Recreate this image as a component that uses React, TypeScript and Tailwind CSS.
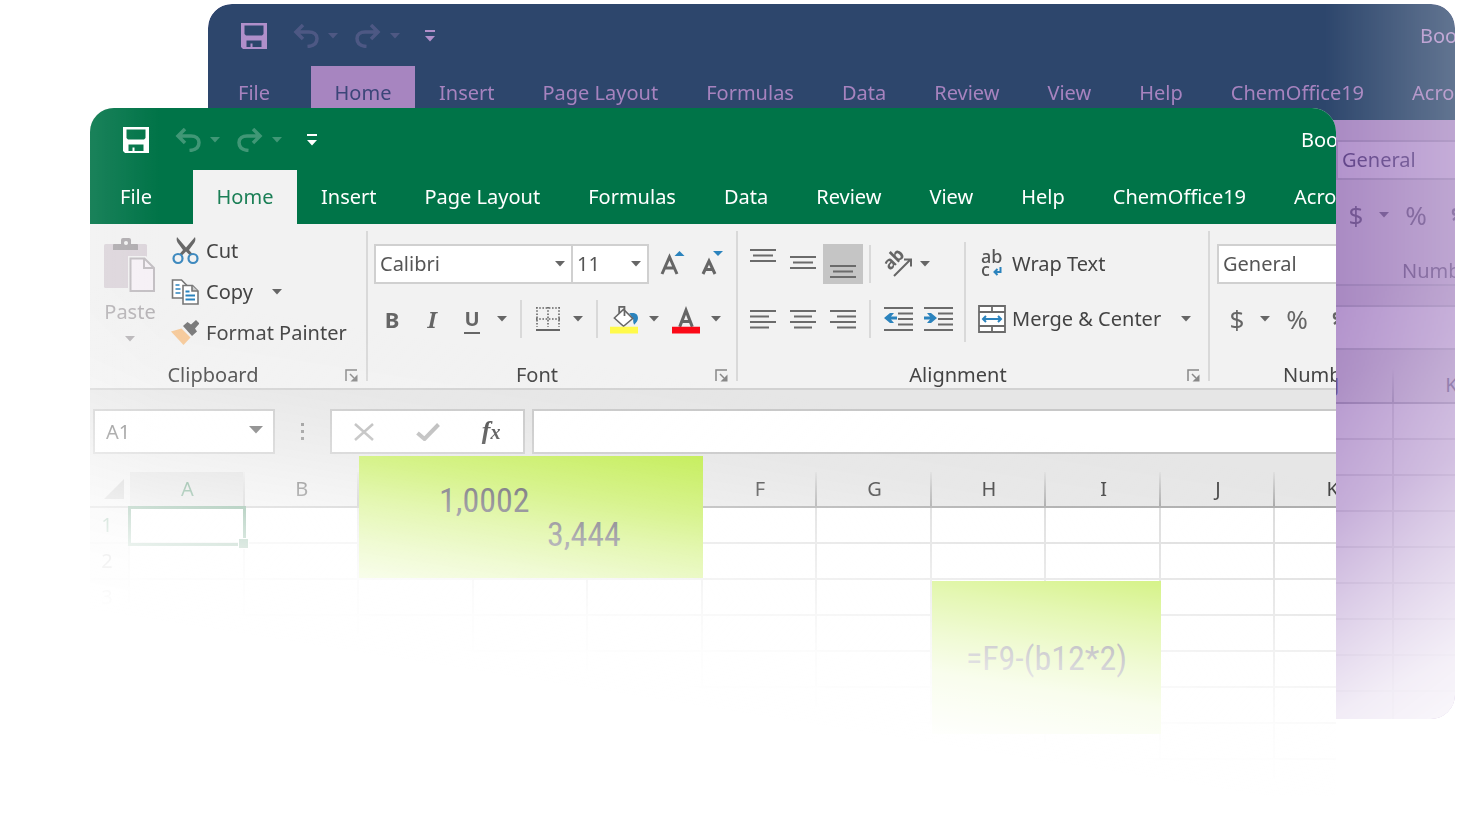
import type { ReactNode } from "react";
import clsx from "clsx";

interface Theme {
  bar: string;
  ink: string;
  tab: string;
  activeTab: string;
}

const green: Theme = {
  bar: "bg-[#007448]",
  ink: "text-white",
  tab: "text-white",
  activeTab: "bg-[#f2f2f2] text-[#1b7f56]",
};

const purple: Theme = {
  bar: "bg-[#2d466c]",
  ink: "text-[#b08fca]",
  tab: "text-[#a783bf]",
  activeTab: "bg-[#a785c0] text-[#3b4679]",
};

const TABS = ["Insert", "Page Layout", "Formulas", "Data", "Review", "View", "Help", "ChemOffice19", "Acrobat"];
// C to E stay unnamed, the first highlighted range lies over their headers
const COLUMNS = ["A", "B", "", "", "", "F", "G", "H", "I", "J", "K"];
const ROWS = [1, 2, 3, 4, 5, 6, 7, 8];

const Caret = ({ className }: { className?: string }) => (
  <svg viewBox="0 0 10 6" className={clsx("h-[6px] w-[10px]", className)} fill="currentColor" aria-hidden="true">
    <path d="M0 0h10L5 5.6z" />
  </svg>
);

const CaretButton = ({ label, className }: { label: string; className?: string }) => (
  <button type="button" aria-label={label} className={clsx("flex h-10 w-5 shrink-0 items-center justify-center", className)}>
    <Caret />
  </button>
);

const IconButton = ({ label, className, children }: { label: string; className?: string; children: ReactNode }) => (
  <button type="button" aria-label={label} className={clsx("flex h-10 shrink-0 items-center justify-center", className)}>
    {children}
  </button>
);

const SaveIcon = () => (
  <svg viewBox="0 0 26 26" className="h-[26px] w-[26px]" aria-hidden="true">
    <path
      fill="currentColor"
      fillRule="evenodd"
      d="M0 0h26v26H2l-2-2zM3.500 2.500v8.500l1.500 1.500h16l1.500-1.500V2.500zM5.500 17.500V24h4v-3.500h2V24h9v-6.500z"
    />
  </svg>
);

const UndoIcon = ({ flip }: { flip?: boolean }) => (
  <svg
    viewBox="0 0 26 24"
    className={clsx("h-6 w-[26px]", flip && "-scale-x-100")}
    fill="none"
    stroke="currentColor"
    strokeWidth="3.500"
    aria-hidden="true"
  >
    <path d="M10 1L3 8l7 7M3 8h13c4.500 0 8 2.500 8 6.500 0 4.500-3 7.500-9.500 8" />
  </svg>
);

const TitleBar = ({ theme }: { theme: Theme }) => (
  <div className={clsx("flex h-[62px] items-center pt-[2px] pl-[33px]", theme.ink)}>
    <button type="button" aria-label="Save">
      <SaveIcon />
    </button>
    <button type="button" aria-label="Undo" className="ml-[26px] opacity-25">
      <UndoIcon />
    </button>
    <CaretButton label="Undo history" className="ml-1 opacity-25" />
    <button type="button" aria-label="Redo" className="ml-3 opacity-25">
      <UndoIcon flip />
    </button>
    <CaretButton label="Redo history" className="ml-1 opacity-25" />
    <button type="button" aria-label="Customize toolbar" className="ml-5">
      <svg viewBox="0 0 10 12" className="h-3 w-[10px]" fill="currentColor" aria-hidden="true">
        <path d="M0 0h10v2H0zM0 6h10l-5 5.500z" />
      </svg>
    </button>
    <span className="ml-auto w-[35px] whitespace-nowrap">Book1</span>
  </div>
);

const TabBar = ({ theme }: { theme: Theme }) => (
  <nav className={clsx("flex h-[54px] whitespace-nowrap", theme.tab)}>
    <button type="button" className="w-[103px] shrink-0 pl-[30px] text-left">
      File
    </button>
    <button type="button" className={clsx("w-[104px] shrink-0", theme.activeTab)}>
      Home
    </button>
    {TABS.map((tab) => (
      <button key={tab} type="button" className="shrink-0 px-6">
        {tab}
      </button>
    ))}
  </nav>
);

const Separator = ({ className }: { className: string }) => <div className={clsx("w-[2px] shrink-0 bg-[#d9d9d9]", className)} />;

const Group = ({ name, className, children }: { name: string; className: string; children: ReactNode }) => (
  <section className={clsx("flex shrink-0 flex-col", className)}>
    <div className="h-[132px]">{children}</div>
    <div className="flex h-6 items-center">
      <span className="flex-1 text-center text-[#444]">{name}</span>
      <button type="button" aria-label={name + " settings"} className="flex w-[30px] justify-center text-[#888]">
        <svg viewBox="0 0 13 13" className="h-[13px] w-[13px]" fill="none" stroke="currentColor" strokeWidth="1.500" aria-hidden="true">
          <path d="M1 12V1h11M5 5l4 4" />
          <path d="M12.500 5.500v7h-7z" fill="currentColor" stroke="none" />
        </svg>
      </button>
    </div>
  </section>
);

const Picker = ({ label, value, className }: { label: string; value: string; className: string }) => (
  <div className={clsx("relative h-10", className)}>
    <select
      aria-label={label}
      defaultValue={value}
      className="h-full w-full appearance-none border-2 border-[#d0d0d0] bg-white pl-1 text-[#555] outline-none"
    >
      <option>{value}</option>
    </select>
    <Caret className="pointer-events-none absolute top-[17px] right-2 text-[#666]" />
  </div>
);

const PasteIcon = () => (
  <svg viewBox="0 0 52 56" className="h-14 w-[52px]" aria-hidden="true">
    <rect y="6" width="43" height="44" rx="1.500" fill="#ddd6dc" />
    <path d="M9 12V7q0-1 1-1h7V2q0-2 2-2h6q2 0 2 2v4h6q1 0 1 1v5z" fill="#b0adb0" />
    <circle cx="22" cy="5" r="2" fill="#f2f2f2" />
    <path d="M24 18h18l10 10v27H24z" fill="#f2f2f2" />
    <path d="M26.500 20.500h14l9.500 9.500v23H26.500z" fill="#f6f1f6" stroke="#c4c0c4" strokeWidth="2" />
    <path d="M40 20.500V30h10" fill="none" stroke="#c4c0c4" strokeWidth="2" />
  </svg>
);

const CutIcon = () => (
  <svg viewBox="0 0 28 28" className="h-7 w-7" fill="none" aria-hidden="true">
    <path
      d="M6 0c-1 3 0 5 2 7.500l4 5.500-3.500 4 2.500 1.500 4-4 4 4 2.500-1.500L18 13l4-5.500C24 5 25 3 24 0l-9 10.500z"
      fill="#686868"
    />
    <circle cx="7" cy="21.500" r="4.500" stroke="#3f8abf" strokeWidth="2.200" />
    <circle cx="22" cy="21.500" r="4.500" stroke="#3f8abf" strokeWidth="2.200" />
  </svg>
);

const CopyIcon = () => (
  <svg viewBox="0 0 28 28" className="h-7 w-7" fill="#fff" stroke="#777" strokeWidth="1.600" aria-hidden="true">
    <path d="M1.500 2h9l5 5v13h-14z" />
    <path d="M4.500 7h4M4.500 11h5M4.500 15h5" stroke="#2b83bd" />
    <path d="M12 7.500h9.500l5.500 5.500v13H12z" />
    <path d="M21 7.500V13h6" fill="#ccc" />
    <path d="M14.500 13.500h4M14.500 17.500h9.500M14.500 21.500h9.500" stroke="#2b83bd" strokeWidth="1.800" />
  </svg>
);

const PainterIcon = () => (
  <svg viewBox="0 0 28 28" className="h-7 w-7" aria-hidden="true">
    <path d="M0 12.500l10.500-3 9 9L12.500 26z" fill="#f6c897" />
    <path d="M12 7l4.500-4L20 5.500 25 1l3.500 3.500L24 9.500l2 3-5 4.500z" fill="#777" />
  </svg>
);

const ClipboardGroup = () => (
  <Group name="Clipboard" className="w-[276px]">
    <div className="flex gap-[13px] pl-3">
      <button type="button" className="flex w-14 shrink-0 flex-col items-center pt-[7px] text-[#b5b2b5]">
        <PasteIcon />
        <span className="leading-9">Paste</span>
        <Caret className="mt-[6px]" />
      </button>
      <div className="flex flex-col text-[#444]">
        <button type="button" className="flex h-10 items-center gap-[7px]">
          <CutIcon />
          Cut
        </button>
        <button type="button" className="flex h-[41px] items-center gap-[7px]">
          <CopyIcon />
          Copy
          <Caret className="ml-3 text-[#666]" />
        </button>
        <button type="button" className="flex h-[41px] items-center gap-[7px] whitespace-nowrap">
          <PainterIcon />
          Format Painter
        </button>
      </div>
    </div>
  </Group>
);

const FontGroup = () => (
  <Group name="Font" className="w-[368px]">
    <div className="flex flex-col gap-[15px] pt-[13px] text-[#666]">
      <div className="flex pl-[6px]">
        <Picker label="Font" value="Calibri" className="w-[199px]" />
        <Picker label="Font size" value="11" className="-ml-[2px] w-[78px]" />
        <IconButton label="Increase font size" className="ml-1 w-10">
          <svg viewBox="0 0 26 26" className="h-[26px] w-[26px]" aria-hidden="true">
            <path d="M2 23L9.500 6L17 23M5 17h9" fill="none" stroke="#666" strokeWidth="3" />
            <path d="M14.500 5h10L19.500 0z" fill="#2b83bd" />
          </svg>
        </IconButton>
        <IconButton label="Decrease font size" className="w-10">
          <svg viewBox="0 0 26 26" className="h-[26px] w-[26px]" aria-hidden="true">
            <path d="M3 23L9 10L15 23M5.500 18.500h7" fill="none" stroke="#666" strokeWidth="3" />
            <path d="M13 0h10L18 5z" fill="#2b83bd" />
          </svg>
        </IconButton>
      </div>
      <div className="flex items-center pl-1">
        <button type="button" className="h-10 w-10 text-[22px] font-bold">
          B
        </button>
        <button type="button" className="h-10 w-10 font-['Noto_Serif','DejaVu_Serif',serif] text-[22px] font-bold italic">
          I
        </button>
        <button type="button" className="h-10 w-10">
          <span className="border-b-2 border-current font-bold">U</span>
        </button>
        <CaretButton label="Underline styles" />
        <Separator className="mr-3 ml-2 h-[38px]" />
        <IconButton label="Borders" className="w-7">
          <svg viewBox="0 0 24 24" className="h-6 w-6" fill="none" stroke="currentColor" strokeWidth="1.600" aria-hidden="true">
            <path d="M0 1h24M0 12h24M1 0v20M12 0v20M23 0v20" strokeDasharray="1.600 1.600" />
            <path d="M0 23h24" strokeWidth="2" />
          </svg>
        </IconButton>
        <CaretButton label="Border styles" className="ml-[6px]" />
        <Separator className="mr-3 ml-2 h-[38px]" />
        <IconButton label="Fill color" className="w-7">
          <svg viewBox="0 0 29 29" className="h-[29px] w-[29px]" fill="none" aria-hidden="true">
            <path d="M20 8c6-1 9 1 9 5 0 3-2 5-4 7-1-2-1-4-1-6z" fill="#2b83bd" />
            <path d="M4.500 13L14 4l9.500 9.500L14 21.500z" fill="#fff" stroke="#666" strokeWidth="1.600" />
            <path d="M9.500 8V1.500h5.500V11" stroke="#666" strokeWidth="1.800" />
            <path d="M0 22h29v7H0z" fill="#fffa4b" />
          </svg>
        </IconButton>
        <CaretButton label="Fill colors" className="ml-[6px]" />
        <IconButton label="Font color" className="ml-2 w-7">
          <svg viewBox="0 0 29 29" className="h-[29px] w-[29px]" fill="none" aria-hidden="true">
            <path d="M8 22L14.500 5L21 22M10 16.500h9" stroke="#666" strokeWidth="3.200" />
            <path d="M0 22h29v7H0z" fill="#fb0a18" />
          </svg>
        </IconButton>
        <CaretButton label="Font colors" className="ml-[6px]" />
      </div>
    </div>
  </Group>
);

// Stacked strokes of the alignment buttons, one path per icon.
const Lines = ({ d }: { d: string }) => (
  <svg viewBox="0 0 26 40" className="h-10 w-[26px]" fill="none" stroke="#6b6b6b" strokeWidth="2" aria-hidden="true">
    <path d={d} />
  </svg>
);

const IndentIcon = ({ arrow }: { arrow: string }) => (
  <svg viewBox="0 0 29 24" className="h-6 w-[29px]" fill="none" stroke="#6b6b6b" strokeWidth="2" aria-hidden="true">
    <path d="M0 1h29M14 6.500h15M14 12h15M14 17.500h15M0 23h29" />
    <path d={arrow} fill="#2b83bd" stroke="none" />
  </svg>
);

const AlignmentGroup = () => (
  <Group name="Alignment" className="w-[470px]">
    <div className="flex pt-[11px] pl-[5px] text-[#666]">
      <div className="flex flex-col gap-[15px] pt-[2px]">
        <div className="flex items-center">
          <IconButton label="Top align" className="w-10">
            <Lines d="M0 6h26M3 11.500h20M0 17h26" />
          </IconButton>
          <IconButton label="Middle align" className="w-10">
            <Lines d="M0 13h26M3 18.500h20M0 24h26" />
          </IconButton>
          <IconButton label="Bottom align" className="w-10 bg-[#c5c5c5]">
            <Lines d="M0 22h26M3 27.500h20M0 33h26" />
          </IconButton>
          <Separator className="mr-2 ml-[6px] h-[38px]" />
          <IconButton label="Orientation" className="w-9">
            <svg viewBox="0 0 32 30" className="h-[30px] w-8" aria-hidden="true">
              <text x="9" y="22" transform="rotate(-45 9 22)" className="font-['Noto_Sans',sans-serif] text-[18px] font-bold" fill="#666">
                ab
              </text>
              <path d="M13 27L29 11M23 10.500h7v7" fill="none" stroke="#666" strokeWidth="2" />
            </svg>
          </IconButton>
          <CaretButton label="Orientation options" />
        </div>
        <div className="flex items-center">
          <IconButton label="Align left" className="w-10">
            <Lines d="M0 12h26M0 17.500h19M0 23h26M0 28.500h19" />
          </IconButton>
          <IconButton label="Align center" className="w-10">
            <Lines d="M0 12h26M4 17.500h18M0 23h26M4 28.500h18" />
          </IconButton>
          <IconButton label="Align right" className="w-10">
            <Lines d="M0 12h26M7 17.500h19M0 23h26M7 28.500h19" />
          </IconButton>
          <Separator className="mr-[7px] ml-[6px] h-[38px]" />
          <IconButton label="Decrease indent" className="w-10">
            <IndentIcon arrow="M0 11l6-5h4l-3 3.500h6v3H7l3 3.500H6z" />
          </IconButton>
          <IconButton label="Increase indent" className="w-10">
            <IndentIcon arrow="M13 11L7 6H3l3 3.500H0v3h6L3 16h4z" />
          </IconButton>
        </div>
      </div>
      <Separator className="ml-[6px] h-[100px]" />
      <div className="flex flex-col gap-[15px] pt-[2px] pl-3 text-[#444]">
        <button type="button" className="flex h-10 items-center gap-[6px] whitespace-nowrap">
          <svg viewBox="0 0 28 32" className="h-8 w-7" aria-hidden="true">
            <text x="3" y="15" className="font-['Noto_Sans',sans-serif] text-[18px] font-medium" fill="#555">
              ab
            </text>
            <text x="3" y="28" className="font-['Noto_Sans',sans-serif] text-[18px] font-medium" fill="#555">
              c
            </text>
            <path d="M22.500 19v5H17M19.500 21l-3 3 3 3" fill="none" stroke="#2b83bd" strokeWidth="2" />
          </svg>
          Wrap Text
        </button>
        <button type="button" className="flex h-10 items-center gap-[6px] whitespace-nowrap">
          <svg viewBox="0 0 28 28" className="h-7 w-7" fill="none" stroke="#6b6b6b" strokeWidth="1.800" aria-hidden="true">
            <path d="M1 1h26v26H1z" fill="#fff" />
            <path d="M1 7h26M1 21h26M14 1v6M14 21v6" />
            <path d="M5 14h18M8 11l-3 3 3 3M20 11l3 3-3 3" stroke="#2b83bd" strokeWidth="2" />
          </svg>
          Merge &amp; Center
          <Caret className="ml-[14px] text-[#666]" />
        </button>
      </div>
    </div>
  </Group>
);

const NumberGroup = ({ tinted, className }: { tinted?: boolean; className?: string }) => (
  <section className={clsx("min-w-[119px] overflow-hidden", tinted ? "text-[#6b4c8c]" : "text-[#666]", className)}>
    <div className="flex h-[132px] flex-col gap-[15px] pt-[13px]">
      <select
        aria-label="Number format"
        defaultValue="General"
        className={clsx(
          "h-10 w-[220px] shrink-0 appearance-none border-2 pl-1 outline-none",
          tinted ? "border-[#987bb4] bg-[#b191cb] text-[#5d3f86]" : "border-[#d0d0d0] bg-white text-[#555]",
        )}
      >
        <option>General</option>
      </select>
      <div className="flex items-center">
        <button type="button" className="h-10 w-10 shrink-0 text-[26px]">
          $
        </button>
        <CaretButton label="Currency options" className="-ml-[2px]" />
        <button type="button" className="ml-[2px] h-10 w-10 shrink-0 text-[26px]">
          %
        </button>
        <IconButton label="Comma style" className="w-10">
          <svg viewBox="0 0 10 14" className="h-[14px] w-[10px]" fill="none" stroke="currentColor" strokeWidth="2.500" aria-hidden="true">
            <circle cx="4.500" cy="4" r="2.500" />
            <path d="M7 4c0 4-2 6-5 8" />
          </svg>
        </IconButton>
      </div>
    </div>
    <div className={clsx("h-6 pl-[66px] leading-6", !tinted && "text-[#444]")}>Number</div>
  </section>
);

const FormulaBar = () => (
  <div className="flex pt-[19px] pl-[3px] text-[#666]">
    <div className="relative h-[45px] w-[182px] shrink-0">
      <input aria-label="Name box" defaultValue="A1" className="h-full w-full border-2 border-[#c8c8c8] bg-white pl-[11px] outline-none" />
      <svg viewBox="0 0 14 8" className="absolute top-[17px] right-3 h-2 w-[14px]" fill="currentColor" aria-hidden="true">
        <path d="M0 0h14L7 7.500z" />
      </svg>
    </div>
    <div className="flex w-[55px] shrink-0 flex-col items-center justify-center gap-1 text-[#888]">
      <i className="h-[3px] w-[3px] bg-current" />
      <i className="h-[3px] w-[3px] bg-current" />
      <i className="h-[3px] w-[3px] bg-current" />
    </div>
    <div className="flex w-[195px] shrink-0 items-center border-2 border-[#c8c8c8] bg-white">
      <IconButton label="Cancel" className="flex-1">
        <svg viewBox="0 0 20 18" className="h-[18px] w-5" stroke="#b5b5b5" strokeWidth="2.500" aria-hidden="true">
          <path d="M1 1l18 16M19 1L1 17" />
        </svg>
      </IconButton>
      <IconButton label="Enter" className="flex-1">
        <svg viewBox="0 0 24 18" className="h-[18px] w-6" fill="none" stroke="#b5b5b5" strokeWidth="4" aria-hidden="true">
          <path d="M1.500 10l7 6L22.500 1.500" />
        </svg>
      </IconButton>
      <button type="button" className="flex-1 font-['Liberation_Serif',serif] text-[26px] leading-none font-bold text-[#444] italic">
        f<span className="text-xl">x</span>
      </button>
    </div>
    <input aria-label="Formula" className="ml-[7px] h-[45px] min-w-0 flex-1 border-2 border-r-0 border-[#c8c8c8] bg-white outline-none" />
  </div>
);

const Sheet = () => (
  <div className="relative">
    <div className="h-[18px]" />
    <table className="w-[1300px] table-fixed border-separate border-spacing-0 bg-white">
      <thead>
        <tr className="h-9 bg-[#e6e6e6]">
          <th className="w-10 border-b-2 border-[#ababab] p-0">
            <svg viewBox="0 0 20 20" className="mr-[6px] ml-auto h-5 w-5" fill="#b4b4b4" aria-hidden="true">
              <path d="M20 0v20H0z" />
            </svg>
          </th>
          {COLUMNS.map((column, i) => (
            <th
              key={i}
              className={clsx(
                "border-b-2 border-[#ababab] bg-linear-to-b from-[#e0e0e0] to-[#a8a8a8] bg-[length:2px_100%] bg-right bg-no-repeat p-0 font-normal",
                column === "A" ? "bg-[#d2d2d2] text-[#217346]" : "text-[#444]",
              )}
            >
              {column}
            </th>
          ))}
        </tr>
      </thead>
      <tbody>
        {ROWS.map((row) => (
          <tr key={row} className="h-9">
            <th className={clsx("border-r-2 border-b-2 border-[#d0d0d0] bg-[#e6e6e6] p-0 pr-1 font-normal", row === 1 ? "text-[#217346]" : "text-[#444]")}>
              {row}
            </th>
            {COLUMNS.map((_, i) => (
              <td key={i} className="border-r-2 border-b-2 border-[#dcdcdc] p-0" />
            ))}
          </tr>
        ))}
      </tbody>
    </table>
    <div className="absolute top-[52px] left-[38px] h-10 w-[118px] border-[3px] border-[#217346]">
      <span className="absolute -right-[6px] -bottom-[6px] h-[11px] w-[11px] border border-white bg-[#217346]" />
    </div>
    <div className="absolute top-[2px] left-[269px] flex h-[122px] w-[344px] flex-col bg-[#bfec48] pt-[27px] font-['Roboto_Condensed','Liberation_Sans_Narrow','Roboto',sans-serif] text-[34px] leading-[34px] text-[#33303c]">
      <span className="pl-20">1,0002</span>
      <span className="pl-[188px]">3,444</span>
    </div>
    <div className="absolute top-[127px] left-[842px] flex h-[153px] w-[229px] items-center justify-center bg-[#bfec48] font-['Roboto_Condensed','Liberation_Sans_Narrow','Roboto',sans-serif] text-[34px] text-[#33303c]">
      =F9-(b12*2)
    </div>
  </div>
);

const FrontWindow = () => (
  <main className="relative mr-[125px] ml-[90px] overflow-hidden rounded-t-[24px] bg-[#e6e6e6]">
    <header className={green.bar}>
      <TitleBar theme={green} />
      <TabBar theme={green} />
    </header>
    <div className="flex h-[166px] border-b-2 border-[#d2d2d2] bg-[#f2f2f2] pt-[7px]">
      <ClipboardGroup />
      <Separator className="h-[150px]" />
      <FontGroup />
      <Separator className="h-[150px]" />
      <AlignmentGroup />
      <Separator className="h-[150px]" />
      <NumberGroup className="ml-[7px] flex-1" />
    </div>
    <FormulaBar />
    <Sheet />
    {/* the window dissolves into the page towards the lower left */}
    <div className="pointer-events-none absolute inset-0 bg-[linear-gradient(189deg,rgba(255,255,255,0)_370px,rgba(255,255,255,0.12)_440px,rgba(255,255,255,0.38)_500px,rgba(255,255,255,0.59)_540px,rgba(255,255,255,0.76)_580px,rgba(255,255,255,0.9)_620px,#fff_690px),linear-gradient(90deg,rgba(255,255,255,0.1),rgba(255,255,255,0)_70px)]" />
  </main>
);

const BackWindow = () => (
  <div className="absolute top-1 right-[6px] left-[208px] h-[715px] overflow-hidden rounded-[24px] rounded-bl-none bg-[#a686c0] [mask-composite:intersect] [mask-image:linear-gradient(335deg,rgba(0,0,0,0.1),rgba(0,0,0,0.18)_55px,rgba(0,0,0,0.38)_119px,rgba(0,0,0,0.76)_237px,rgba(0,0,0,0.95)_355px,#000_420px),linear-gradient(270deg,rgba(0,0,0,0.75),#000_130px)]">
    <header className={purple.bar}>
      <TitleBar theme={purple} />
      <TabBar theme={purple} />
    </header>
    <div className="h-[166px] border-b-2 border-[#987bb4] bg-[#a888c2] pt-[7px]">
      <NumberGroup tinted className="ml-auto w-[119px]" />
    </div>
    <div className="mt-[19px] h-[45px] border-y-2 border-[#987bb4] bg-[#b191cb]" />
    <div className="-mr-[54px] flex justify-end pt-[18px]">
      <table className="w-[230px] table-fixed border-separate border-spacing-0 bg-[#b191cb]">
        <thead>
          <tr className="h-9 bg-[#a686c0] text-[#5d3f86]">
            <th className="border-b-2 border-[#8a6ba8] bg-linear-to-b from-[#a686c0] to-[#8a6ba8] bg-[length:2px_100%] bg-right bg-no-repeat p-0 font-normal">
              J
            </th>
            <th className="border-b-2 border-[#8a6ba8] p-0 font-normal">K</th>
          </tr>
        </thead>
        <tbody>
          {[...ROWS, 9].map((row) => (
            <tr key={row} className="h-9">
              <td className="border-r-2 border-b-2 border-[#a080bb] p-0" />
              <td className="border-b-2 border-[#a080bb] p-0" />
            </tr>
          ))}
        </tbody>
      </table>
    </div>
  </div>
);

export default function App() {
  return (
    <div className="relative overflow-hidden bg-white pt-[108px] font-['Noto_Sans',sans-serif] text-xl leading-6">
      <BackWindow />
      <FrontWindow />
    </div>
  );
}
